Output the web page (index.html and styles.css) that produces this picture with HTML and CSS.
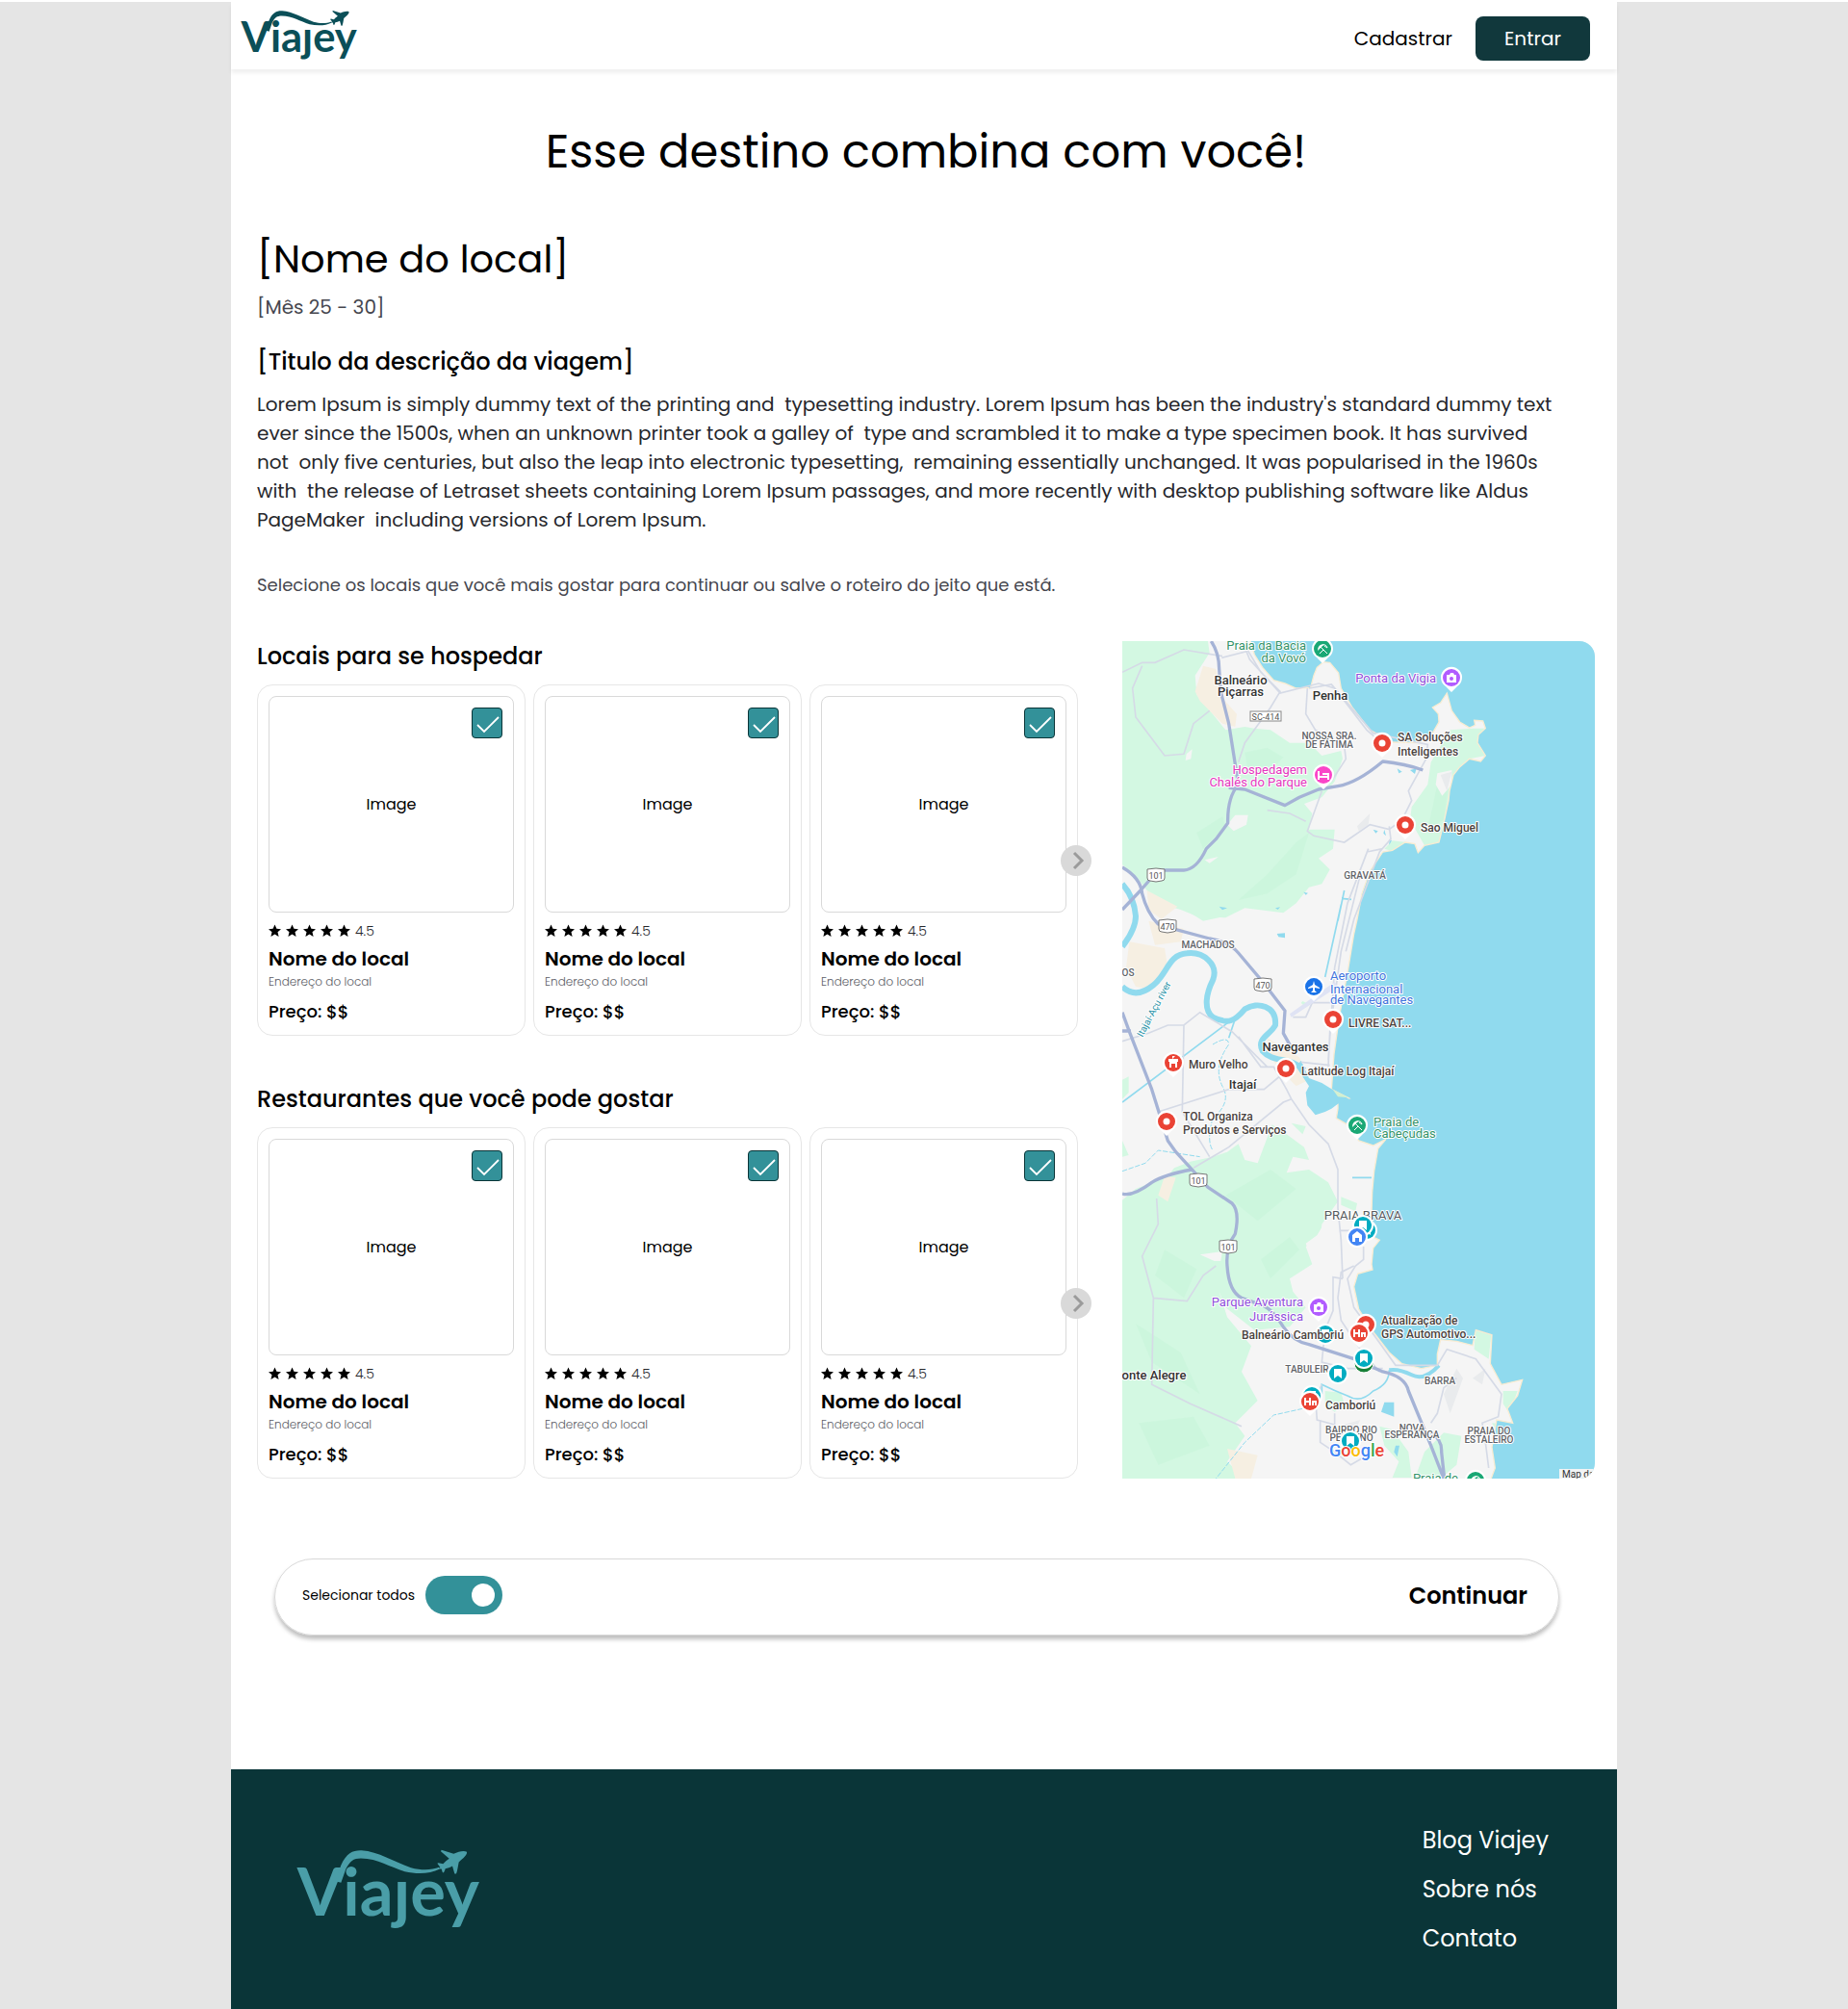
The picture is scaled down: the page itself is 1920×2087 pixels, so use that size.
FILE: index.html
```html
<!DOCTYPE html>
<html lang="pt-BR">
<head>
<meta charset="utf-8">
<meta name="viewport" content="width=device-width, initial-scale=1">
<title>Viajey</title>
<link rel="stylesheet" href="styles.css">
</head>
<body>
<svg class="defs" aria-hidden="true">
  <defs>
    <symbol id="logo" viewBox="55 88 570 260" overflow="visible">
      <text class="logo-word" x="57" y="298">Viaȷey</text>
      <path d="M176 190L194 140C212 100 232 93 258 94C310 97 360 130 412 148C445 157 475 156 500 147L502 152C470 168 430 168 393 160C345 146 310 120 256 119C232 119 222 128 209 152L194 195Z"/>
      <path d="M586 99C588 108 576 118 561 131C558 145 557 158 553 167L548 167L541 143C534 147 526 150 519 151C517 157 516 161 513 164L510 162L507 152L500 152L503 147L494 135L498 133L512 136C518 130 524 125 531 120L505 97L507 93L545 105C560 98 577 94 586 99Z"/>
    </symbol>
    <symbol id="stars" viewBox="0 0 86 14">
      <path id="star" d="M6.500 .500L8.400 4.800L13 5.200L9.500 8.200L10.600 13L6.500 10.400L2.400 13L3.500 8.200L0 5.200L4.600 4.800Z"/>
      <use href="#star" x="18"/><use href="#star" x="36"/><use href="#star" x="54"/><use href="#star" x="72"/>
    </symbol>
    <symbol id="chevron" viewBox="0 0 32 32">
      <path d="M14 8L22 16L14 24" fill="none" stroke="#9b9b9b" stroke-width="3"/>
    </symbol>
    <g id="pin">
      <path d="M0 15L-6 9A11 11 0 1 1 6 9Z" fill="#fff"/>
      <circle r="9"/>
    </g>
    <g id="dot"><use href="#pin" fill="#ea4335"/><circle r="3.500" fill="#fff"/></g>
    <g id="beach"><use href="#pin" fill="#1aa875"/><path d="M-5 2Q-5 -5 2 -5Z" fill="#fff"/><path d="M-2 -2L5 5M2 -3L5 -1M0 -4Q4 -5 5 -1M-3 5L1 1" fill="none" stroke="#fff"/></g>
    <g id="camera"><use href="#pin" fill="#b15cff"/><path d="M-5 -3H-2L-1 -5H2L3 -3H5V5H-5Z" fill="#fff"/><circle cy="1" r="2" fill="#b15cff"/></g>
    <g id="saved"><circle r="11" fill="#fff"/><circle r="9" fill="#00acc1"/><path d="M-4 -5H4V5L0 2L-4 5Z" fill="#fff"/></g>
    <g id="hotel"><use href="#pin" fill="#ea4335"/><path d="M-5 -4V4M-5 0H0M0 -4V4M3 4V0H6V4" fill="none" stroke="#fff" stroke-width="2"/></g>
    <g id="shield"><path d="M-9 -6Q0 -8 9 -6V3Q9 6 6 6Q0 8 -6 6Q-9 6 -9 3Z" fill="#fff" stroke="#777"/></g>
  </defs>
</svg>

<div class="page">
  <header class="topbar">
    <a class="brand" href="#" aria-label="Viajey"><svg class="logo logo-small" aria-hidden="true"><use href="#logo"/></svg></a>
    <nav class="account">
      <a class="signup" href="#">Cadastrar</a>
      <button class="login" type="button">Entrar</button>
    </nav>
  </header>

  <main class="content">
    <h1 class="title">Esse destino combina com você!</h1>
    <h2 class="place">[Nome do local]</h2>
    <p class="dates">[Mês 25 - 30]</p>
    <h3 class="subtitle">[Titulo da descrição da viagem]</h3>
    <p class="description">Lorem Ipsum is simply dummy text of the printing and  typesetting industry. Lorem Ipsum has been the industry's standard dummy text
ever since the 1500s, when an unknown printer took a galley of  type and scrambled it to make a type specimen book. It has survived
not  only five centuries, but also the leap into electronic typesetting,  remaining essentially unchanged. It was popularised in the 1960s
with  the release of Letraset sheets containing Lorem Ipsum passages, and more recently with desktop publishing software like Aldus
PageMaker  including versions of Lorem Ipsum.</p>
    <p class="hint">Selecione os locais que você mais gostar para continuar ou salve o roteiro do jeito que está.</p>

    <div class="planner">
      <div class="lists">
        <section class="list">
          <h3 class="list-title">Locais para se hospedar</h3>
          <div class="cards">
            <article class="card">
              <div class="photo">Image<input class="pick" type="checkbox" checked aria-label="Selecionar hospedagem 1"></div>
              <div class="rating"><svg class="stars" aria-hidden="true"><use href="#stars"/></svg>4.5</div>
              <h4 class="name">Nome do local</h4>
              <p class="address">Endereço do local</p>
              <p class="price">Preço: $$</p>
            </article>
            <article class="card">
              <div class="photo">Image<input class="pick" type="checkbox" checked aria-label="Selecionar hospedagem 2"></div>
              <div class="rating"><svg class="stars" aria-hidden="true"><use href="#stars"/></svg>4.5</div>
              <h4 class="name">Nome do local</h4>
              <p class="address">Endereço do local</p>
              <p class="price">Preço: $$</p>
            </article>
            <article class="card">
              <div class="photo">Image<input class="pick" type="checkbox" checked aria-label="Selecionar hospedagem 3"></div>
              <div class="rating"><svg class="stars" aria-hidden="true"><use href="#stars"/></svg>4.5</div>
              <h4 class="name">Nome do local</h4>
              <p class="address">Endereço do local</p>
              <p class="price">Preço: $$</p>
            </article>
            <button class="next" type="button" aria-label="Próximas hospedagens"><svg class="next-icon" aria-hidden="true"><use href="#chevron"/></svg></button>
          </div>
        </section>
        <section class="list">
          <h3 class="list-title">Restaurantes que você pode gostar</h3>
          <div class="cards">
            <article class="card">
              <div class="photo">Image<input class="pick" type="checkbox" checked aria-label="Selecionar restaurante 1"></div>
              <div class="rating"><svg class="stars" aria-hidden="true"><use href="#stars"/></svg>4.5</div>
              <h4 class="name">Nome do local</h4>
              <p class="address">Endereço do local</p>
              <p class="price">Preço: $$</p>
            </article>
            <article class="card">
              <div class="photo">Image<input class="pick" type="checkbox" checked aria-label="Selecionar restaurante 2"></div>
              <div class="rating"><svg class="stars" aria-hidden="true"><use href="#stars"/></svg>4.5</div>
              <h4 class="name">Nome do local</h4>
              <p class="address">Endereço do local</p>
              <p class="price">Preço: $$</p>
            </article>
            <article class="card">
              <div class="photo">Image<input class="pick" type="checkbox" checked aria-label="Selecionar restaurante 3"></div>
              <div class="rating"><svg class="stars" aria-hidden="true"><use href="#stars"/></svg>4.5</div>
              <h4 class="name">Nome do local</h4>
              <p class="address">Endereço do local</p>
              <p class="price">Preço: $$</p>
            </article>
            <button class="next" type="button" aria-label="Próximos restaurantes"><svg class="next-icon" aria-hidden="true"><use href="#chevron"/></svg></button>
          </div>
        </section>
      </div>

      <svg class="map" viewBox="0 0 491 870" preserveAspectRatio="xMidYMid slice" role="img" aria-label="Mapa do litoral">
        <rect width="491" height="870" fill="#f5f5f5"/>
        <g transform="scale(.33333) translate(-18 -33)">
          <!-- vegetation -->
          <g fill="#d3f8e2">
            <path d="M18 33H285L290 70L245 140L250 200L300 260L340 310L400 300L430 305L480 310L540 350L600 350L640 390L700 375L705 400L680 470L640 520L585 540L610 570L600 620L680 620L675 680L630 710L665 745L640 790L600 800L560 850L520 880L400 865L340 895L250 890L200 870L130 850L95 810L60 765L18 730Z"/>
            <path d="M1040 310L1110 305L1150 305L1125 340L1150 390L1100 400L1050 450L1020 600L1005 660L960 670L915 590L920 550L970 480L980 410Z"/>
            <path d="M860 655L905 660L860 688L835 680Z"/>
            <path d="M190 855H400L340 890L270 905Z"/>
            <path d="M18 1400L38 1390V1440L18 1460ZM18 1590L38 1635L18 1640Z"/>
            <path d="M485 1540L530 1570L585 1610L600 1650L550 1640L530 1690L600 1680L660 1720L690 1780L640 1850L635 1900L590 1920L610 1975L540 2020L550 2060L590 2110L540 2170L430 2180L340 2110L320 2060L345 2140L420 2230L390 2310L440 2400L370 2470L400 2510L345 2590L400 2643H18V1775L60 1740L160 1700L180 1675L230 1655L300 1640L345 1625L380 1600L400 1650L440 1660Z"/>
            <path d="M545 1535L590 1545L580 1570ZM700 1765L750 1785L745 1810L700 1790Z"/>
            <path d="M1118 2180L1168 2195L1160 2270L1115 2240ZM1205 2370L1250 2370L1225 2440L1205 2410ZM1170 2470L1230 2475L1200 2520Z"/>
            <path d="M820 2480L860 2490L910 2560L920 2640H860L880 2590L835 2540ZM1020 2500L1075 2510L1060 2600L1010 2643H930L960 2560Z"/>
            <path d="M650 2370L700 2375L710 2410L680 2435L650 2410ZM575 1160L580 1155L600 1165L590 1175Z"/>
          </g>
          <g fill="#b6f0cf" opacity=".2">
            <path d="M400 380L470 365L520 395L470 450L410 440ZM560 660L600 630L560 760L470 820L380 840L470 760ZM250 630L330 580L340 610L270 680ZM340 1760L480 1680L560 1740L440 1840ZM150 1930L250 1990L210 2080L120 2010ZM450 1960L540 1890L570 1930L480 2020ZM60 2160L200 2250L260 2380L110 2280ZM70 2470L240 2450L290 2540L130 2600ZM1000 480L1040 440L1020 590L970 620Z"/>
          </g>
          <path d="M218 385L236 370L232 400L215 405ZM345 605L370 575L410 575L405 605L365 625ZM275 715L318 705L290 725ZM1000 445L1045 435L1045 480L1015 515L995 480ZM590 1910L625 1885L640 1860L670 1905L640 1920L595 1925ZM260 1945L330 1935L325 1965L305 1965Z" fill="#f5f5f5"/>
          <g fill="#e9ebed">
            <path d="M750 610L790 570L785 605L755 625ZM1010 450L1045 440L1030 500ZM1020 2380L1060 2300L1080 2330L1040 2440ZM1110 2330L1150 2300L1140 2350ZM690 2480L760 2460L740 2500Z"/>
          </g>
          <g fill="#f6efe2">
            <path d="M270 110L310 120L330 210L375 260L370 300L330 290L260 220L245 190ZM95 810L190 860L140 900L100 870ZM40 970L150 990L160 1050L110 1120L60 1110L30 1050ZM100 905L210 930L200 970L120 980ZM470 1270L570 1330L600 1400L560 1420L530 1390L470 1320ZM345 2550L440 2570L420 2643H370ZM150 1700L185 1705L160 1780L130 1760Z"/>
          </g>
          <!-- sea -->
          <path fill="#90daee" stroke="#f8ecd2" stroke-width="4" d="M415 25L430 75L455 115L490 155L525 165L560 180L605 178L615 140L625 115L645 98L665 100L692 132L700 180L735 240L790 310L860 348L940 350L985 320L1005 285L1003 260L985 240L1010 225L1030 195L1045 250L1070 285L1100 303L1118 295L1115 280L1142 282L1150 305L1128 325L1125 350L1150 390L1135 408L1100 400L1070 425L1050 450L1038 500L1035 530L1020 600L1005 660L960 670L940 692L930 665L900 660L860 685L830 690L790 750L765 820L750 900L740 945L722 1055L695 1200L678 1320L670 1430L725 1458L690 1465L690 1490L685 1520L720 1540L755 1590L800 1605L840 1585L815 1615L803 1685L797 1750L795 1815L800 1890L820 1900L800 1925L795 1975L798 1992L752 2005L740 2045L755 2115L800 2185L850 2250L890 2285L950 2300L1000 2290L1000 2255L1010 2210L1060 2215L1110 2228L1120 2180L1170 2195L1165 2285L1200 2350L1265 2335L1250 2385L1218 2425L1235 2470L1185 2460L1170 2545L1180 2610L1165 2650H1520V20Z"/>
          <path fill="#90daee" d="M575 1340L600 1395L640 1410L680 1435L725 1460L690 1475L670 1490L650 1500L620 1510L595 1480L590 1440L600 1420L560 1360ZM835 2405L865 2405L865 2450L825 2435ZM870 2540H882L875 2575L865 2560Z"/>
          <path d="M675 1432L725 1456L690 1453Z" fill="#d3f0d0"/>
          <!-- rivers -->
          <g fill="none" stroke="#90daee">
            <path stroke-width="18" d="M18 790Q55 830 60 890Q60 930 18 985M18 1110Q60 1150 115 1105C160 1070 160 1010 220 1006C270 1000 320 1040 300 1090C280 1130 270 1180 300 1205C350 1230 370 1215 400 1180C440 1155 500 1170 495 1230C480 1260 435 1270 455 1310C490 1350 540 1325 585 1370"/>
            <path stroke-width="12" d="M1005 2290Q960 2340 920 2320Q880 2300 850 2305"/>
            <path stroke-width="5" d="M850 2305Q850 2350 800 2370Q760 2410 720 2385Q680 2370 640 2350V2380M350 1270L370 1210M18 1470L350 1220M710 810L690 905M702 835L732 838M700 855L650 1080M735 1705H795"/>
            <path stroke-width="3" stroke-dasharray="16 5" d="M300 1290Q350 1260 350 1290Q300 1360 330 1420Q360 1470 300 1520Q280 1590 300 1620M18 1685L90 1660L130 1620L260 1640M580 2425L490 2445L400 2530L310 2643"/>
          </g>
          <path fill="#90daee" d="M875 430L890 440L880 445ZM915 435L935 430L930 447ZM800 620L815 625L808 632ZM835 620L840 640L832 632ZM850 650L858 655L850 668ZM320 860L345 865L330 871ZM583 815L597 818L590 824ZM495 865L510 862L503 870ZM500 945L525 943V958L505 955Z"/>
          <!-- minor roads -->
          <g fill="none" stroke="#d5dae6" stroke-width="5">
            <path d="M328 85L405 65L415 90L510 195L630 165L680 180L780 310L820 345M405 55L450 130L510 190L480 240L400 350L380 410M595 180L590 260L620 310L710 360L715 400L670 470M600 180L670 168L800 320L970 355L965 400L910 500L920 530L890 590L850 620L790 605L710 660L615 640L595 625L640 500M780 690L830 680M785 680L720 850L680 1050L660 1340M760 760L700 1000L665 1250L660 1360M850 610L855 650L820 690L740 900L715 1000"/>
            <path d="M18 1280L100 1255L160 1230L210 1230L260 1190L360 1250L440 1330L470 1360M210 1230L205 1500L290 1640M380 1265L450 1360L490 1360L530 1430L545 1460L600 1540L660 1600L690 1680L690 1800L700 1900L705 2020M130 1500L350 1430L460 1430L520 1380M240 1675L350 1610L520 1470L545 1460M550 1205L590 1205L610 1160L690 1160M575 1345L665 1355M640 2350L620 2390L625 2460L680 2475V2440M635 2460V2530L680 2560L730 2600L800 2560"/>
            <path d="M705 2020L675 2015V2120L650 2180L640 2280L720 2300L830 2300M740 1980L700 2000L690 2080L700 2150L760 2240L820 2310M695 1870H745M770 1920V1960L745 1980L720 2020L740 2110L820 2220L870 2290L1000 2290L1030 2240L1120 2270L1200 2380L1190 2450L1140 2470L1150 2530L1160 2610M1060 2330L1020 2360L1000 2440L980 2470"/>
            <path d="M125 1770L130 1850L80 1950L115 2080L110 2350L230 2410L390 2480M115 2080L220 2090L270 2010L310 1980M18 130L80 100L120 100L210 60L330 80M80 110L50 180L60 270L150 390L210 385L240 290L290 250M470 560L540 570L590 595"/>
          </g>
          <path d="M540 1195L680 1095L690 1110L590 1175L545 1205Z" fill="#dfe3f4"/>
          <!-- highways -->
          <g fill="none" stroke="#a5b3d6" stroke-width="10" stroke-linejoin="round">
            <path d="M295 33Q320 70 320 120L325 190L350 290L380 480Q345 520 347 600L310 650L280 680Q250 745 210 747H130L75 810L18 870M350 490L400 495L525 545L570 520L630 495L690 485Q750 475 830 408Q900 415 955 435M18 738Q75 770 80 820Q95 880 130 915L160 925L290 960Q350 970 380 1005L460 1100L525 1185L520 1255L545 1300"/>
            <path d="M18 1190L40 1250L110 1430L160 1590L185 1625L235 1680L285 1735L360 1785Q385 1810 370 1880Q340 1920 345 1980Q350 2060 390 2080L460 2105Q490 2120 520 2170Q550 2215 600 2225L740 2270L830 2310Q900 2325 910 2370L980 2540L1020 2643M18 1755Q50 1765 110 1720Q150 1695 235 1680M980 2500Q1015 2520 1013 2560L1022 2643M18 1248H45"/>
          </g>
        </g>

        <g class="lb area" text-anchor="middle">
          <text x="215" y="102">NOSSA SRA.</text><text x="215" y="111">DE FÁTIMA</text>
          <text x="252" y="247">GRAVATÁ</text><text x="89" y="319">MACHADOS</text>
          <text x="6" y="348">OS</text><text x="330" y="772">BARRA</text>
          <text x="192" y="760">TABULEIR</text>
          <text x="238" y="823">BAIRRO RIO</text><text x="238" y="831">PEQUENO</text>
          <text x="301" y="821">NOVA</text><text x="301" y="828">ESPERANÇA</text>
          <text x="381" y="824">PRAIA DO</text><text x="381" y="833">ESTALEIRO</text>
        </g>
        <text class="lb suburb" x="250" y="601" text-anchor="middle">PRAIA BRAVA</text>
        <g class="lb city" text-anchor="middle">
          <text x="123" y="45">Balneário</text><text x="123" y="57">Piçarras</text>
          <text x="216" y="61">Penha</text><text x="180" y="426">Navegantes</text>
          <text x="125" y="465">Itajaí</text><text x="33" y="767">onte Alegre</text>
        </g>
        <g class="lb water"><text transform="translate(21 412) rotate(-62)">Itajaí-Açu river</text></g>

        <rect x="133" y="73" width="32" height="10" fill="#fff" stroke="#888"/>
        <use href="#shield" x="35" y="243"/><use href="#shield" x="47" y="296"/><use href="#shield" x="146" y="357"/>
        <use href="#shield" x="79" y="560"/><use href="#shield" x="110" y="629"/>
        <g class="road" text-anchor="middle">
          <text x="149" y="82">SC-414</text><text x="35" y="247">101</text><text x="47" y="300">470</text>
          <text x="146" y="361">470</text><text x="79" y="564">101</text><text x="110" y="633">101</text>
        </g>

        <use href="#beach" x="208" y="8"/><use href="#camera" x="342" y="38"/><use href="#dot" x="270" y="106"/>
        <use href="#pin" x="209" y="139" fill="#fa46c8"/><path d="M204 135V144M204 141H214V138H208M214 144V139" fill="none" stroke="#fff" stroke-width="2"/>
        <use href="#dot" x="294" y="191"/>
        <use href="#pin" x="199" y="359" fill="#1a73e8"/><path d="M199 353L200 357L205 360V361L200 360V363L202 365H196L198 363V360L193 361V360L198 357Z" fill="#fff"/>
        <use href="#dot" x="219" y="393"/>
        <use href="#pin" x="53" y="438" fill="#ea4335"/><path d="M49 443V436H57V443H55V439H51V443ZM48 434H58V437H48ZM52 434V431H55" fill="#fff"/>
        <use href="#dot" x="170" y="444"/><use href="#dot" x="46" y="499"/><use href="#beach" x="244" y="503"/>
        <use href="#saved" x="254" y="612"/><use href="#saved" x="250" y="607"/>
        <circle cx="244" cy="619" r="10" fill="#4285f4" stroke="#fff" stroke-width="2"/><path d="M239 624V617L244 613L249 617V624H246V620H242V624Z" fill="#fff"/>
        <use href="#camera" x="204" y="692"/><use href="#saved" x="211" y="720"/>
        <use href="#dot" x="253" y="710"/><use href="#hotel" x="246" y="719"/>
        <circle cx="251" cy="750" r="10" fill="#188038" stroke="#fff"/><use href="#saved" x="251" y="745"/>
        <use href="#saved" x="224" y="761"/><use href="#saved" x="197" y="784"/><use href="#hotel" x="195" y="790"/>
        <use href="#saved" x="237" y="831"/><use href="#beach" x="367" y="872"/>

        <g class="lb spot">
          <text x="286" y="104">SA Soluções</text><text x="286" y="119">Inteligentes</text>
          <text x="310" y="198">Sao Miguel</text><text x="235" y="401">LIVRE SAT...</text>
          <text x="69" y="444">Muro Velho</text><text x="186" y="451">Latitude Log Itajaí</text>
          <text x="63" y="498">TOL Organiza</text><text x="63" y="512">Produtos e Serviços</text>
          <text x="124" y="725">Balneário Camboriú</text><text x="211" y="798">Camboriú</text>
          <text x="269" y="710">Atualização de</text><text x="269" y="724">GPS Automotivo...</text>
        </g>
        <g class="lb poi">
          <g class="green"><text x="191" y="9" text-anchor="end">Praia da Bacia</text><text x="191" y="22" text-anchor="end">da Vovó</text>
            <text x="261" y="504">Praia de</text><text x="261" y="516">Cabeçudas</text><text x="349" y="874" text-anchor="end">Praia de</text></g>
          <g class="purple" text-anchor="end"><text x="326" y="43">Ponta da Vigia</text><text x="188" y="691">Parque Aventura</text><text x="188" y="706">Jurássica</text></g>
          <g class="pink" text-anchor="end"><text x="192" y="138">Hospedagem</text><text x="192" y="151">Chalés do Parque</text></g>
          <g class="blue"><text x="216" y="352">Aeroporto</text><text x="216" y="366">Internacional</text><text x="216" y="377">de Navegantes</text></g>
        </g>
        <text class="google" x="215" y="847"><tspan fill="#4285f4">G</tspan><tspan fill="#ea4335">o</tspan><tspan fill="#fbbc04">o</tspan><tspan fill="#4285f4">g</tspan><tspan fill="#34a853">l</tspan><tspan fill="#ea4335">e</tspan></text>
        <rect x="454" y="860" width="37" height="10" fill="#f2f4f5"/>
        <text class="credit" x="457" y="869">Map da</text>
      </svg>
    </div>

    <div class="actions">
      <label class="select-all">Selecionar todos<input class="switch" type="checkbox" role="switch" checked></label>
      <button class="continue" type="button">Continuar</button>
    </div>
  </main>

  <footer class="footer">
    <a class="brand" href="#" aria-label="Viajey"><svg class="logo logo-large" aria-hidden="true"><use href="#logo"/></svg></a>
    <nav class="links">
      <a href="#">Blog Viajey</a>
      <a href="#">Sobre nós</a>
      <a href="#">Contato</a>
    </nav>
  </footer>
</div>
</body>
</html>
```
FILE: styles.css
```css
* { box-sizing: border-box; margin: 0; }

body {
  background: #e5e5e5;
  border-top: 2px solid #fff;
  color: #000;
  font-family: Poppins, Inter, sans-serif;
}

a { color: inherit; text-decoration: none; }
button { border: 0; font: inherit; cursor: pointer; }

.defs { position: absolute; width: 0; height: 0; }
.page { max-width: 1440px; margin: 0 auto; background: #fff; }

.topbar {
  display: flex;
  align-items: center;
  justify-content: space-between;
  height: 70px;
  padding: 0 28px 0 10px;
  box-shadow: 0 4px 4px rgba(0, 0, 0, .06);
}
.brand { display: flex; }
.logo { fill: currentColor; overflow: visible; }
.logo-small { width: 121px; height: 55px; color: #0b4f58; }
.logo-large { width: 190px; height: 87px; color: #4a9ea8; }
.logo-word { font: 700 206px Lato, sans-serif; }
.account { display: flex; align-items: center; gap: 24px; margin-top: 6px; font-size: 20px; }
.login {
  width: 119px;
  height: 46px;
  border-radius: 8px;
  background: #11383c;
  color: #fff;
}

.content { padding: 0 23px 139px 27px; }
.title { margin-top: 50px; font-size: 48px; font-weight: 400; line-height: 72px; text-align: center; }
.place { margin-top: 45px; font-size: 40px; font-weight: 400; line-height: 60px; }
.dates { margin-top: 5px; color: #45464e; font-size: 20px; line-height: 30px; }
.subtitle { margin-top: 24px; font-size: 24px; font-weight: 500; line-height: 36px; }
.description { margin-top: 11px; color: #26272c; font-size: 20px; line-height: 30px; white-space: pre-wrap; }
.hint { margin-top: 39px; color: #45464e; font-size: 18px; line-height: 27px; }

.planner {
  display: grid;
  grid-template-columns: minmax(0, 1fr) 491px;
  gap: 46px;
  margin-top: 45px;
}
.lists { display: flex; flex-direction: column; gap: 50px; }
.list-title { margin-bottom: 13px; font-size: 24px; font-weight: 500; line-height: 32px; }
.cards { position: relative; display: grid; grid-template-columns: repeat(3, 1fr); gap: 8px; }
.card { padding: 11px; border: 1px solid #e6e6e6; border-radius: 16px; }
.photo {
  position: relative;
  display: flex;
  align-items: center;
  justify-content: center;
  height: 225px;
  border: 1px solid #d9d9d9;
  border-radius: 8px;
  font-size: 16px;
}
.pick {
  position: absolute;
  top: 11px;
  right: 11px;
  width: 32px;
  height: 32px;
  appearance: none;
  border: 1px solid #0a3538;
  border-radius: 4px;
}
.pick:checked {
  background: #339199 url("data:image/svg+xml,%3Csvg xmlns='http://www.w3.org/2000/svg' viewBox='0 0 30 30'%3E%3Cpath d='M5 17L12 24L27 9' fill='none' stroke='white' stroke-width='1.800'/%3E%3C/svg%3E");
}
.rating { display: flex; align-items: center; gap: 4px; margin-top: 9px; color: #26272c; font-size: 14px; font-weight: 300; line-height: 20px; }
.stars { width: 86px; height: 14px; fill: #000; }
.name { margin-top: 5px; font-size: 20px; font-weight: 600; line-height: 28px; }
.address { margin-top: 1px; color: #5c5d66; font-size: 12px; font-weight: 300; line-height: 18px; }
.price { margin-top: 9px; font-size: 18px; font-weight: 500; line-height: 26px; }
.next {
  position: absolute;
  top: 50%;
  right: -14px;
  width: 32px;
  height: 32px;
  margin-top: -16px;
  padding: 0;
  border-radius: 50%;
  background: #d9d9d9;
}
.next-icon { display: block; width: 32px; height: 32px; }

.map { display: block; width: 100%; height: 100%; border-radius: 0 16px 16px 0; font-family: Roboto, sans-serif; }
.lb { stroke: #fff; stroke-width: 2px; stroke-linejoin: round; paint-order: stroke; }
.area { fill: #5f6368; font-size: 10px; font-weight: 500; }
.suburb { fill: #55595d; font-size: 13px; }
.city { fill: #333; font-size: 13px; font-weight: 500; }
.water { fill: #2a93a8; font-size: 10px; }
.spot { fill: #4a4340; font-size: 12px; font-weight: 500; }
.poi { font-size: 13px; }
.green { fill: #33936a; }
.purple { fill: #8f4fdb; }
.pink { fill: #e337bd; }
.blue { fill: #3f74dd; }
.road { fill: #555; font-size: 9px; }
.google { stroke: #fff; stroke-width: 2px; paint-order: stroke; font-size: 18px; font-weight: 500; }
.credit { fill: #333; font-size: 10px; }

.actions {
  display: flex;
  align-items: center;
  justify-content: space-between;
  height: 80px;
  margin: 83px 37px 0 18px;
  padding: 0 32px 4px 28px;
  border: 1px solid #d9d9d9;
  border-radius: 40px;
  box-shadow: 0 4px 4px rgba(0, 0, 0, .25);
}
.select-all { display: flex; align-items: center; gap: 11px; font-size: 14px; }
.switch {
  display: flex;
  align-items: center;
  width: 80px;
  height: 40px;
  margin: 0;
  padding: 0 8px;
  appearance: none;
  border-radius: 20px;
  background: #b5b5b5;
}
.switch::before { content: ""; width: 24px; height: 24px; border-radius: 50%; background: #fff; }
.switch:checked { justify-content: flex-end; background: #339199; }
.continue { padding: 0; background: none; font-size: 24px; font-weight: 600; }

.footer {
  display: flex;
  align-items: center;
  justify-content: space-between;
  padding: 56px 71px 55px 68px;
  background: #0a3538;
}
.links { display: flex; flex-direction: column; gap: 15px; color: #fff; font-size: 24px; line-height: 36px; }
```
